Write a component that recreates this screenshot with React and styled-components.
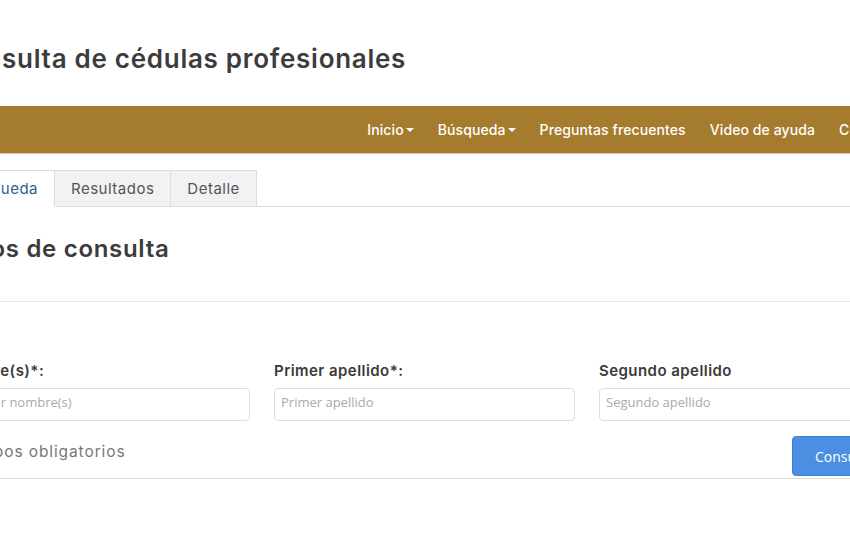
import React from "react";
import styled, { createGlobalStyle } from "styled-components";

const GlobalStyle = createGlobalStyle`
  html, body {
    margin: 0;
    padding: 0;
    background: #fff;
    overflow: hidden;
  }
  body {
    font-family: Inter, "Open Sans", sans-serif;
    color: #333;
  }
  * { box-sizing: border-box; }
`;

const navItems = [
  { label: "Inicio", caret: true },
  { label: "Búsqueda", caret: true },
  { label: "Preguntas frecuentes" },
  { label: "Video de ayuda" },
  { label: "Contacto" },
];

const fields = [
  { label: "Nombre(s)*:", placeholder: "Ingresar nombre(s)" },
  { label: "Primer apellido*:", placeholder: "Primer apellido" },
  { label: "Segundo apellido", placeholder: "Segundo apellido" },
];

export default function App() {
  return (
    <>
      <GlobalStyle />
      <Page>
        <Container>
          <Title>Consulta de cédulas profesionales</Title>
        </Container>
        <NavBar>
          <NavInner>
            {navItems.map((item) => (
              <NavItem key={item.label}>
                {item.label}
                {item.caret && <Caret />}
              </NavItem>
            ))}
          </NavInner>
        </NavBar>
        <Container>
          <Tabs>
            <Tab active>Búsqueda</Tab>
            <Tab>Resultados</Tab>
            <Tab>Detalle</Tab>
          </Tabs>
          <Heading>Datos de consulta</Heading>
          <Divider />
          <FieldRow>
            {fields.map((f) => (
              <Field key={f.label}>
                <Label>{f.label}</Label>
                <Input placeholder={f.placeholder} />
              </Field>
            ))}
          </FieldRow>
          <Footer>
            <Note>*Campos obligatorios</Note>
            <Button>Consultar</Button>
          </Footer>
        </Container>
      </Page>
    </>
  );
}

const Page = styled.div`
  width: 850px;
  height: 560px;
  overflow: hidden;
`;
const Container = styled.div`
  width: 975px;
  margin-left: -51px;
`;
const Title = styled.h1`
  margin: 0;
  padding-top: 43px;
  height: 106px;
  font-size: 26px;
  font-weight: 600;
  color: #3c3c3c;
  letter-spacing: 0.72px;
`;
const NavBar = styled.nav`
  height: 48px;
  background: #a57c2e;
  border-bottom: 1px solid #d8c9a4;
`;
const NavInner = styled.ul`
  display: flex;
  justify-content: flex-end;
  align-items: center;
  height: 100%;
  width: 975px;
  margin: 0 0 0 -51px;
  padding: 0 23px 0 0;
  list-style: none;
  gap: 24px;
`;
const NavItem = styled.li`
  display: flex;
  align-items: center;
  color: #fff;
  font-size: 14px;
  font-weight: 500;
  letter-spacing: 0.1px;
  white-space: nowrap;
`;
const Caret = styled.span`
  display: inline-block;
  margin-left: 2px;
  border-top: 4px solid #fff;
  border-left: 4px solid transparent;
  border-right: 4px solid transparent;
`;
const Tabs = styled.div`
  display: flex;
  margin-top: 16px;
  margin-left: -3px;
  border-bottom: 1px solid #ddd;
`;
const Tab = styled.div`
  padding: 0 16px;
  height: 37px;
  line-height: 36px;
  font-size: 15px;
  letter-spacing: 0.5px;
  margin-bottom: -1px;
  color: ${(p) => (p.active ? "#2f5f8a" : "#555")};
  background: ${(p) => (p.active ? "#fff" : "#f2f2f2")};
  border: 1px solid #ddd;
  border-bottom-color: ${(p) => (p.active ? "#fff" : "#ddd")};
  border-left-width: ${(p) => (p.active ? "1px" : "0")};
`;
const Heading = styled.h2`
  margin: 0;
  padding-top: 27px;
  height: 94px;
  font-size: 24px;
  font-weight: 600;
  letter-spacing: 0.7px;
  color: #3c3c3c;
`;
const Divider = styled.hr`
  margin: 0;
  border: 0;
  border-top: 1px solid #e6e6e6;
`;
const FieldRow = styled.div`
  display: grid;
  grid-template-columns: repeat(3, 301px);
  column-gap: 24px;
  margin-top: 59px;
`;
const Field = styled.div`
  display: flex;
  flex-direction: column;
`;
const Label = styled.label`
  font-size: 15px;
  font-weight: 600;
  letter-spacing: 0.45px;
  color: #3a3a3a;
  margin-bottom: 8px;
`;
const Input = styled.input`
  height: 33px;
  border: 1px solid #ddd;
  border-radius: 4px;
  padding: 0 6px 5px;
  font-family: "Open Sans", sans-serif;
  font-size: 13px;
  color: #555;
  &::placeholder {
    color: #aaa;
  }
`;
const Footer = styled.div`
  display: flex;
  justify-content: space-between;
  align-items: flex-end;
  margin-top: 15px;
  padding-bottom: 2px;
  border-bottom: 1px solid #ddd;
  width: 1000px;
`;
const Note = styled.span`
  font-size: 15.5px;
  letter-spacing: 0.9px;
  color: #777;
  margin-bottom: 15px;
`;
const Button = styled.button`
  width: 110px;
  height: 40px;
  margin-right: 47px;
  border: 1px solid #3d7fd0;
  border-radius: 4px;
  background: #4a8fe2;
  color: #fff;
  font-family: "Open Sans", sans-serif;
  font-size: 14px;
  text-align: left;
  padding-left: 22px;
`;
